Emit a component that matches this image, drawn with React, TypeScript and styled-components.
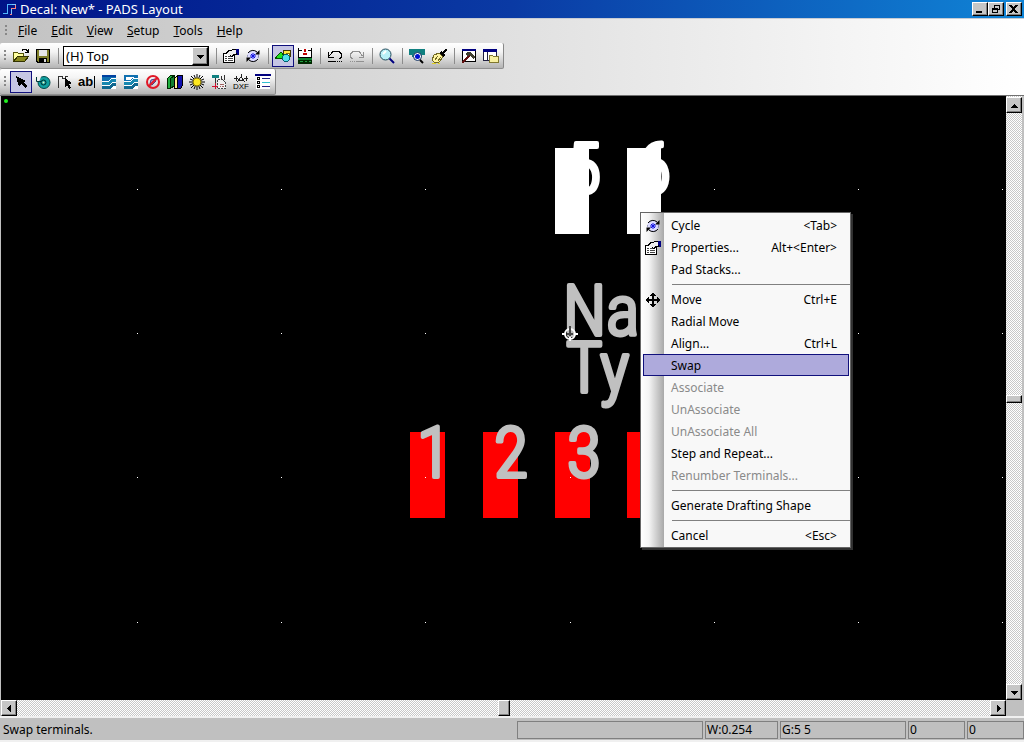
import React from 'react';
import styled, { createGlobalStyle, css } from 'styled-components';

const GlobalStyle = createGlobalStyle`
  * { box-sizing: border-box; }
  body { margin: 0; background: #c0c0c0; }
  body, button, select { font-family: "Noto Sans", "Open Sans", sans-serif; font-size: 12px; line-height: 16px; color: #000; }
  button { padding: 0; border: 0; background: none; }
`;

const raised = css`
  background: #c6c6c6;
  border: 1px solid;
  border-color: #fff #000 #000 #fff;
  box-shadow: inset -1px -1px 0 #808080;
`;

const Window = styled.div`
  display: flex;
  flex-direction: column;
  min-height: 100vh;
`;

const TitleBar = styled.header`
  display: flex;
  align-items: center;
  gap: 3px;
  height: 18px;
  padding: 0 2px 0 3px;
  color: #fff;
  background: linear-gradient(90deg, #001488 0%, #0a3aa4 50%, #1084d6 100%);
`;

const Title = styled.h1`
  flex: 1;
  margin: 0;
  font-size: 13px;
  font-weight: 400;
  line-height: 16px;
`;

const CaptionButton = styled.button<{ $apart?: boolean }>`
  ${raised}
  display: flex;
  width: 16px;
  height: 14px;
  margin-left: ${p => (p.$apart ? 2 : 0)}px;
  align-items: center;
  justify-content: center;
`;

const CaptionButtons = styled.div`
  display: flex;
`;

const BarArea = styled.div`
  display: flex;
  flex-direction: column;
  align-items: flex-start;
  height: 78px;
  border-top: 1px solid #c8ccd4;
  border-bottom: 1px solid #707070;
  background: linear-gradient(90deg, #c2c2c2, #fff);
`;

const MenuBar = styled.nav`
  display: flex;
  align-items: center;
  height: 24px;
  padding-left: 5px;
`;

const MenuButton = styled.button`
  height: 20px;
  padding: 0 7px;
  &::first-letter { text-decoration: underline; }
`;

const Grip = styled.span`
  flex: none;
  width: 6px;
  height: 12px;
  background: repeating-linear-gradient(180deg, #888 0 2px, transparent 2px 4px) 0 0 / 2px 12px no-repeat;
`;

const ToolBar = styled.div`
  display: flex;
  align-items: center;
  height: 26px;
  padding: 1px 1px 0 4px;
  border-radius: 2px;
  border-right: 1px solid #888;
  border-bottom: 1px solid #909090;
  background: linear-gradient(180deg, #fff 0%, #f4f4f4 35%, #b4b4b4 100%);
`;

const ToolButton = styled.button<{ $on?: boolean }>`
  display: flex;
  align-items: center;
  justify-content: center;
  width: 22px;
  height: 22px;
  border: 1px solid ${p => (p.$on ? '#10107c' : 'transparent')};
  background: ${p => (p.$on ? '#c6c6e4' : 'none')};
`;

const Divider = styled.span`
  width: 1px;
  height: 16px;
  margin: 0 3px 0 4px;
  background: #8c8c8c;
`;

const SelectBox = styled.div`
  display: flex;
  position: relative;
  width: 146px;
  height: 20px;
  margin: 0 3px 0 1px;
  border: 1px solid #000;
  background: #fff;
`;

const LayerSelect = styled.select`
  appearance: none;
  flex: 1;
  padding: 0 20px 0 2px;
  border: 0;
  border-radius: 0;
  background: none;
  font-size: 13px;
`;

const SelectArrow = styled.span`
  ${raised}
  position: absolute;
  top: 0;
  right: 0;
  display: flex;
  align-items: center;
  justify-content: center;
  width: 16px;
  height: 18px;
  pointer-events: none;
`;

const Workspace = styled.main`
  display: grid;
  flex: 1;
  grid-template-columns: 1fr 16px;
  grid-template-rows: minmax(604px, 1fr) 16px;
  padding: 0 2px 0 1px;
`;

const Canvas = styled.section`
  position: relative;
  overflow: hidden;
  background: #000;
`;

const Drawing = styled.svg`
  position: absolute;
  inset: 0;
  width: 100%;
  height: 100%;
  font-family: "Roboto Condensed", "Roboto", sans-serif;
  font-weight: 300;
  font-size: 70px;
  stroke-linejoin: round;
`;

const ScrollBar = styled.div<{ $vertical?: boolean }>`
  display: flex;
  flex-direction: ${p => (p.$vertical ? 'column' : 'row')};
  padding-top: ${p => (p.$vertical ? 1 : 0)}px;
  background: repeating-conic-gradient(#fff 0 25%, #c8c8c8 0 50%) 0 0 / 2px 2px;
`;

const ScrollTrack = styled.div`
  display: flex;
  flex: 1;
  align-items: center;
  justify-content: center;
`;

const ScrollButton = styled.button`
  ${raised}
  display: flex;
  flex: none;
  align-items: center;
  justify-content: center;
  width: 16px;
  height: 16px;
`;

const Thumb = styled.div<{ $w: number; $h: number }>`
  ${raised}
  width: ${p => p.$w}px;
  height: ${p => p.$h}px;
`;

const StatusBar = styled.footer`
  display: flex;
  align-items: center;
  gap: 2px;
  height: 26px;
  padding: 1px 0 0 3px;
  border-top: 2px solid #f0f0f0;
  border-bottom: 2px solid #f0f0f0;
  background: #c0c0c0;
`;

const StatusText = styled.span`
  flex: 1;
`;

const StatusCell = styled.span<{ $w: number }>`
  width: ${p => p.$w}px;
  height: 18px;
  padding-left: 1px;
  border: 1px solid #808080;
`;

const ContextMenu = styled.div`
  position: absolute;
  top: 116px;
  left: 639px;
  width: 211px;
  padding: 1px 0;
  border: 1px solid #666;
  background: linear-gradient(90deg, #fff 0, #f4f4f4 8px, #a8a8a8 23px, #f8f8f8 23px);
  box-shadow: 2px 2px 0 #303030;
`;

const MenuItem = styled.button<{ $active?: boolean }>`
  display: grid;
  grid-template-columns: 28px 1fr auto;
  align-items: center;
  width: 206px;
  height: 22px;
  margin-left: 2px;
  padding: 2px 12px 0 0;
  text-align: left;
  &:disabled { color: #8a8a8a; }
  ${p => p.$active && css`
    background: #aeaadc;
    box-shadow: inset 0 0 0 1px #10107c;
  `}
`;

const MenuIcon = styled.span`
  display: flex;
  padding-left: 2px;
`;

const MenuRule = styled.hr`
  height: 1px;
  margin: 4px 0 3px 31px;
  border: 0;
  background: #808080;
`;

const Glyph = ({ children, size = 16 }: { children: React.ReactNode; size?: number }) => (
  <svg width={size} height={size} viewBox={`0 0 ${size} ${size}`} shapeRendering="crispEdges" fill="none" aria-hidden="true">
    {children}
  </svg>
);

const PropertiesIcon = () => (
  <Glyph>
    <path d="M.5 5.500h11v9H.5z" fill="#fff" stroke="#000" />
    <path d="M2 8.500h2m1 0h5M2 10.500h2m1 0h5M2 12.500h2m1 0h5" stroke="#444" />
    <path d="M3 5.500l3-3h2l2-1h3v5h-2l-2 2-2-1" fill="#eee" stroke="#000" />
    <path d="M13 1h3v6h-2V5h-1z" fill="#000080" />
  </Glyph>
);

const CycleIcon = () => (
  <Glyph>
    <g shapeRendering="auto">
      <circle cx="8" cy="8" r="5.500" fill="#dcdcff" stroke="#8080b0" strokeDasharray="2 2" />
      <path d="M3 5a6 6 0 0 1 9-1M13 11a6 6 0 0 1-9 1" stroke="#000" />
      <path d="M14.500 2v4.500H10zM1.500 14V9.500H6z" fill="#000" />
      <path d="M8 5v6M5 8h6M6 6l4 4M10 6l-4 4" stroke="#1010e0" />
    </g>
  </Glyph>
);

const OpenIcon = () => (
  <Glyph>
    <path d="M.5 13.500V4.500h4l1 1h5v3" fill="#ffffa0" stroke="#55550a" />
    <path d="M.5 13.500l4-5h11l-4 5z" fill="#8a8a20" stroke="#333300" />
    <path d="M9 2.500l1-1h3l2 2M15.500 1v3.500H12" stroke="#000" />
  </Glyph>
);

const SaveIcon = () => (
  <Glyph>
    <path d="M1.500 1.500h13v13H3l-1.500-1.500z" fill="#80802a" stroke="#000" />
    <path d="M4 2h8v6H4z" fill="#e8e8e8" />
    <path d="M4 10h8v5H4z" fill="#000" />
    <path d="M9 11h2v3H9z" fill="#ddd" />
  </Glyph>
);

const ShapesIcon = () => (
  <Glyph>
    <path d="M8.500 2.500h7v6h-7z" fill="#ffe840" stroke="#403800" />
    <path d="M11 5h3v2h-3z" fill="#fff" stroke="#807000" />
    <path d="M0 10.500L6 4l5 6.500z" fill="#20e020" stroke="#005000" />
    <circle cx="11" cy="10" r="3.500" fill="#50e0e8" stroke="#006070" />
  </Glyph>
);

const BoardIcon = () => (
  <Glyph>
    <path d="M1 1h14v8H1z" fill="#fff" />
    <path d="M1.500 0v10M14.500 0v10M1 2.500h4m6 0h4M1 9.500h14" stroke="#000" />
    <path d="M8 1v3M6 5.500h4" stroke="#c00000" strokeWidth="2" />
    <path d="M1 10h14v2H1z" fill="#108030" />
    <path d="M1 12h14v4H1z" fill="#002800" />
    <path d="M3 13.500h3m2 0h2m2 0h2" stroke="#20a040" />
  </Glyph>
);

const TurnIcon = ({ redo }: { redo?: boolean }) => (
  <Glyph>
    <g transform={redo ? 'matrix(-1 0 0 1 16 0)' : undefined} stroke={redo ? '#909090' : '#000'}>
      <path d="M2.500 8l3-4 3-1h3l3 3v3l-2 2" />
      <path d="M1.500 4v5h5" />
      <path d="M1 13.500h8M10 13.500h1m1 0h1m1 0h1" />
    </g>
  </Glyph>
);

const ZoomIcon = () => (
  <Glyph>
    <g shapeRendering="auto">
      <circle cx="6.500" cy="6.500" r="5.500" fill="#b8f0f8" stroke="#204858" />
      <path d="M4 6l3-3" stroke="#fff" strokeWidth="2" />
      <path d="M10.500 10.500l4.500 4.500" stroke="#000080" strokeWidth="2" />
    </g>
  </Glyph>
);

const ViewBoardIcon = () => (
  <Glyph>
    <path d="M0 1h16v6h-3v2H3V7H0z" fill="#108080" />
    <g shapeRendering="auto">
      <circle cx="8.500" cy="8.500" r="4" fill="#fff" stroke="#103060" />
      <circle cx="8.500" cy="8.500" r="2.500" fill="#0010d0" />
      <path d="M11 12l3 3" stroke="#000" strokeWidth="2" />
    </g>
  </Glyph>
);

const BrushIcon = () => (
  <Glyph>
    <path d="M3 7l5-2 4 4-4 5H3L1 12z" fill="#fff4a0" stroke="#706820" />
    <path d="M4 12l3-4M7 13l3-4" stroke="#706820" />
    <path d="M8 5l2-2 2 1 3-4 1 2-3 3 1 2-2 2z" fill="#000" />
    <path d="M1 15.500h4m2 0h2" stroke="#e0d020" />
  </Glyph>
);

const HammerIcon = () => (
  <Glyph>
    <path d="M1.500 2.500h13v11h-13z" fill="#fff" stroke="#000" />
    <path d="M1 1h14v2H1z" fill="#000080" />
    <path d="M1 15l8-8" stroke="#601010" strokeWidth="2" />
    <path d="M4 6l3-2h3l4 5-2 2-3-4-2 1z" fill="#404030" />
  </Glyph>
);

const WindowsIcon = () => (
  <Glyph>
    <path d="M.5 1.500h13v11H.5z" fill="#fff" stroke="#202040" />
    <path d="M0 1h14v3H0z" fill="#000080" />
    <path d="M4.500 4v8" stroke="#202040" />
    <path d="M6.500 14.500v-7h3l1 1h5v6z" fill="#f8f0a0" stroke="#807830" />
  </Glyph>
);

const ArrowIcon = () => (
  <Glyph>
    <path d="M3 2l10 5-3 1 4 4-2 2-4-4-2 3z" fill="#000" />
  </Glyph>
);

const WheelIcon = () => (
  <Glyph>
    <g shapeRendering="auto">
      <circle cx="9" cy="8.500" r="6" fill="#10a0a0" stroke="#004848" />
      <circle cx="8.500" cy="8.500" r="2.500" fill="#10a0a0" stroke="#003030" />
      <circle cx="8.500" cy="8.500" r="1" fill="#f0f0c0" />
      <path d="M2 2l4 1-2 5-3-1z" fill="#f0f0f0" />
      <path d="M1.500 3v4.500H6" stroke="#003838" />
    </g>
  </Glyph>
);

const OutlinePickIcon = () => (
  <Glyph>
    <path d="M1.500 14V2.500h4v2h3v-2h2" stroke="#333" />
    <path d="M8 4l7 5-3 1 2 4-2 1-2-4-2 2z" fill="#000" />
  </Glyph>
);

const TextIcon = () => (
  <Glyph size={20}>
    <text x="1" y="14" fontFamily="Liberation Sans" fontWeight="700" fontSize="13" fill="#000">ab</text>
    <path d="M17.500 4v12" stroke="#000" />
  </Glyph>
);

const WavesIcon = ({ light }: { light?: boolean }) => (
  <Glyph>
    <path d="M1 1h14v14H1z" fill="#fff" />
    <path d="M1 1h14v3h-5L7 7H1z" fill="#1070b0" />
    {light ? <path d="M3 3h8v1H9L7 6H3z" fill="#fff" /> : <path d="M1 1h14v2H1z" fill="#0040a0" />}
    <path d="M1 8h6l3-3h5v3h-4l-3 3H1z" fill="#1888b0" />
    <path d="M1 12h7l3-3h4v3h-3l-3 3H1z" fill="#106890" />
  </Glyph>
);

const ForbidIcon = () => (
  <Glyph>
    <g shapeRendering="auto">
      <path d="M5 10l1-4 4-1 1 2-4 4z" fill="#b0b0e0" stroke="#404090" />
      <circle cx="8" cy="8" r="6" stroke="#e01828" strokeWidth="2" />
      <path d="M4 12l8-8" stroke="#e01828" strokeWidth="2" />
    </g>
  </Glyph>
);

const BooksIcon = () => (
  <Glyph>
    <path d="M.5 4.500l3-3h3v10l-3 3h-3z" fill="#20b040" stroke="#002800" />
    <path d="M3.500 4.500v10l4-3v-10z" fill="#108030" stroke="#002800" />
    <path d="M7.500 4.500l3-3v13h-3z" fill="#fff090" stroke="#000" />
    <path d="M10.500 1.500h5v10l-2 3h-3z" fill="#1010b0" stroke="#000" />
  </Glyph>
);

const SunIcon = () => (
  <Glyph>
    <g shapeRendering="auto">
      <path d="M8 0v16M0 8h16M2 2l12 12M14 2L2 14M5 1l6 14M11 1L5 15M1 5l14 6M1 11l14-6" stroke="#000" />
      <circle cx="8" cy="8" r="4" fill="#ffe820" stroke="#807000" />
    </g>
  </Glyph>
);

const StampIcon = () => (
  <Glyph>
    <path d="M6.500 5.500h5l3 3v6h-8z" fill="#f0f0f0" stroke="#444" strokeDasharray="2 1" />
    <path d="M1 1h7v3H1z" fill="#108080" />
    <path d="M4.500 4v5M10.500 2v3M13.500 1v5" stroke="#333" />
    <path d="M4.500 9v6M1 12.500h6" stroke="#d01030" />
    <path d="M9 12.500h1m1 0h2M9 10.500h4" stroke="#a06060" />
  </Glyph>
);

const DxfIcon = () => (
  <Glyph>
    <path d="M8 0v3L4 8M8 3l4 5M1 4.500h4m6 0h4M3 2v5M13 2v5M6 6.500h4" stroke="#222" />
    <text x="0" y="15" fontFamily="Liberation Sans" fontSize="8" fill="#000">DXF</text>
  </Glyph>
);

const ListIcon = () => (
  <Glyph>
    <path d="M1 1h14v14H1z" fill="#fff" />
    <path d="M0 0h16v2H0z" fill="#000080" />
    <path d="M2.500 3.500h2v2h-2zM2.500 7.500h2v2h-2zM2.500 11.500h2v2h-2z" stroke="#000" />
    <path d="M7 4.500h8M7 12.500h8" stroke="#202080" />
    <path d="M7 8.500h8" stroke="#30c0d0" />
  </Glyph>
);

const MoveIcon = () => (
  <Glyph>
    <path d="M8 2v12M2 8h12" stroke="#000" strokeWidth="2" />
    <path d="M8 0l3 4H5zM8 16l3-4H5zM0 8l4-3v6zM16 8l-4-3v6z" fill="#000" />
  </Glyph>
);

const triangles = {
  up: 'M0 6h7L3.500 2z',
  down: 'M0 2h7L3.500 6z',
  left: 'M5 0v7L1 3.500z',
  right: 'M2 0v7l4-3.500z',
};

const Triangle = ({ dir }: { dir: keyof typeof triangles }) => (
  <Glyph size={7}><path d={triangles[dir]} fill="#000" /></Glyph>
);

const menus = ['File', 'Edit', 'View', 'Setup', 'Tools', 'Help'];

type Tool = { label: string; icon: React.ReactNode; on?: boolean };

const standardTools: Tool[][] = [
  [{ label: 'Properties', icon: <PropertiesIcon /> }, { label: 'Cycle', icon: <CycleIcon /> }],
  [{ label: 'Drafting', icon: <ShapesIcon />, on: true }, { label: 'Board', icon: <BoardIcon /> }],
  [{ label: 'Undo', icon: <TurnIcon /> }, { label: 'Redo', icon: <TurnIcon redo /> }],
  [{ label: 'Zoom', icon: <ZoomIcon /> }],
  [{ label: 'View board', icon: <ViewBoardIcon /> }, { label: 'Redraw', icon: <BrushIcon /> }],
  [{ label: 'Output window', icon: <HammerIcon /> }, { label: 'Project explorer', icon: <WindowsIcon /> }],
];

const draftingTools: Tool[] = [
  { label: 'Select', icon: <ArrowIcon />, on: true },
  { label: 'Terminal', icon: <WheelIcon /> },
  { label: '2D line', icon: <OutlinePickIcon /> },
  { label: 'Text', icon: <TextIcon /> },
  { label: 'Copper', icon: <WavesIcon /> },
  { label: 'Copper cut out', icon: <WavesIcon light /> },
  { label: 'Keepout', icon: <ForbidIcon /> },
  { label: 'From library', icon: <BooksIcon /> },
  { label: 'Decal wizard', icon: <SunIcon /> },
  { label: 'Add label', icon: <StampIcon /> },
  { label: 'Import DXF', icon: <DxfIcon /> },
  { label: 'Options', icon: <ListIcon /> },
];

type Entry = { label: string; keys?: string; icon?: React.ReactNode; active?: boolean; disabled?: boolean };

const contextItems: (Entry | null)[] = [
  { label: 'Cycle', keys: '<Tab>', icon: <CycleIcon /> },
  { label: 'Properties...', keys: 'Alt+<Enter>', icon: <PropertiesIcon /> },
  { label: 'Pad Stacks...' },
  null,
  { label: 'Move', keys: 'Ctrl+E', icon: <MoveIcon /> },
  { label: 'Radial Move' },
  { label: 'Align...', keys: 'Ctrl+L' },
  { label: 'Swap', active: true },
  { label: 'Associate', disabled: true },
  { label: 'UnAssociate', disabled: true },
  { label: 'UnAssociate All', disabled: true },
  { label: 'Step and Repeat...' },
  { label: 'Renumber Terminals...', disabled: true },
  null,
  { label: 'Generate Drafting Shape' },
  null,
  { label: 'Cancel', keys: '<Esc>' },
];

const gridX = [136, 280, 424, 569, 713, 857, 1001];
const gridY = [93, 237, 381, 526];

const ToolList = ({ tools }: { tools: Tool[] }) => (
  <>
    {tools.map(t => (
      <ToolButton key={t.label} $on={t.on} aria-label={t.label} aria-pressed={t.on}>{t.icon}</ToolButton>
    ))}
  </>
);

const DecalDrawing = () => (
  <Drawing role="img" aria-label="Decal with terminals">
    <g fill="#f00">
      {[409, 482, 554, 626].map(x => <rect key={x} x={x} y="336" width="35" height="86" />)}
    </g>
    <g fill="#fff">
      <rect x="554" y="52" width="34" height="86" />
      <rect x="626" y="52" width="34" height="86" />
      {gridX.map(x => gridY.map(y => <rect key={`${x}-${y}`} x={x} y={y} width="1" height="1" />))}
      <circle cx="5" cy="5" r="2" fill="#20f020" />
    </g>
    <g fill="#fff" stroke="#fff" strokeWidth="4">
      <text x="566" y="97">5</text>
      <text x="636" y="97">6</text>
    </g>
    <g fill="#c0c0c0" stroke="#c0c0c0" strokeWidth="4">
      <text x="562" y="239">Na</text>
      <text x="565" y="296">Ty</text>
      <text x="416" y="381">1</text>
      <text x="493" y="381">2</text>
      <text x="566" y="381">3</text>
    </g>
    <g fill="none" stroke="#fff" strokeWidth="2">
      <circle cx="569" cy="238" r="5" />
      <path d="M561 238h4M573 238h4M569 241v4" />
      <path d="M566 238h6M569 230v10" stroke="#444" />
    </g>
  </Drawing>
);

export default function App() {
  return (
    <Window>
      <GlobalStyle />
      <TitleBar>
        <Glyph size={14}>
          <path d="M0 11.500h4.500v-9h4" stroke="#50b8ff" />
          <path d="M7 12.500h1.500v-6h4V2" stroke="#ff8080" />
          <path d="M8.500 12V7M9 2.500h4" stroke="#80c8ff" />
        </Glyph>
        <Title>Decal: New* - PADS Layout</Title>
        <CaptionButtons>
          <CaptionButton aria-label="Minimize"><Glyph size={10}><path d="M1 7h6v2H1z" fill="#000" /></Glyph></CaptionButton>
          <CaptionButton aria-label="Restore">
            <Glyph size={10}><path d="M3.500 4V1.500h5v4H6M3 1.500h6M1.500 4.500h5v4h-5zM1 5.500h6" stroke="#000" /></Glyph>
          </CaptionButton>
          <CaptionButton $apart aria-label="Close"><Glyph size={10}><path d="M1 1l7 8M8 1L1 9" stroke="#000" strokeWidth="2" /></Glyph></CaptionButton>
        </CaptionButtons>
      </TitleBar>

      <BarArea>
        <MenuBar>
          <Grip />
          {menus.map(m => <MenuButton key={m}>{m}</MenuButton>)}
        </MenuBar>
        <ToolBar role="toolbar" aria-label="Standard">
          <Grip />
          <ToolButton aria-label="Open"><OpenIcon /></ToolButton>
          <ToolButton aria-label="Save"><SaveIcon /></ToolButton>
          <Divider />
          <SelectBox>
            <LayerSelect aria-label="Layer" defaultValue="top">
              <option value="top">(H) Top</option>
              <option value="bottom">(V) Bottom</option>
            </LayerSelect>
            <SelectArrow><Triangle dir="down" /></SelectArrow>
          </SelectBox>
          {standardTools.map((group, i) => (
            <React.Fragment key={i}>
              <Divider />
              <ToolList tools={group} />
            </React.Fragment>
          ))}
        </ToolBar>
        <ToolBar role="toolbar" aria-label="Decal editor">
          <Grip />
          <ToolList tools={draftingTools} />
        </ToolBar>
      </BarArea>

      <Workspace>
        <Canvas>
          <DecalDrawing />
          <ContextMenu role="menu">
            {contextItems.map((item, i) =>
              item ? (
                <MenuItem key={item.label} role="menuitem" $active={item.active} disabled={item.disabled}>
                  <MenuIcon>{item.icon}</MenuIcon>
                  <span>{item.label}</span>
                  <span>{item.keys}</span>
                </MenuItem>
              ) : (
                <MenuRule key={i} />
              ),
            )}
          </ContextMenu>
        </Canvas>
        <ScrollBar $vertical>
          <ScrollButton aria-label="Scroll up"><Triangle dir="up" /></ScrollButton>
          <ScrollTrack><Thumb $w={16} $h={8} /></ScrollTrack>
          <ScrollButton aria-label="Scroll down"><Triangle dir="down" /></ScrollButton>
        </ScrollBar>
        <ScrollBar>
          <ScrollButton aria-label="Scroll left"><Triangle dir="left" /></ScrollButton>
          <ScrollTrack><Thumb $w={12} $h={16} /></ScrollTrack>
          <ScrollButton aria-label="Scroll right"><Triangle dir="right" /></ScrollButton>
        </ScrollBar>
      </Workspace>

      <StatusBar>
        <StatusText>Swap terminals.</StatusText>
        <StatusCell $w={186} />
        <StatusCell $w={73}>W:0.254</StatusCell>
        <StatusCell $w={126}>G:5 5</StatusCell>
        <StatusCell $w={57}>0</StatusCell>
        <StatusCell $w={57}>0</StatusCell>
      </StatusBar>
    </Window>
  );
}
